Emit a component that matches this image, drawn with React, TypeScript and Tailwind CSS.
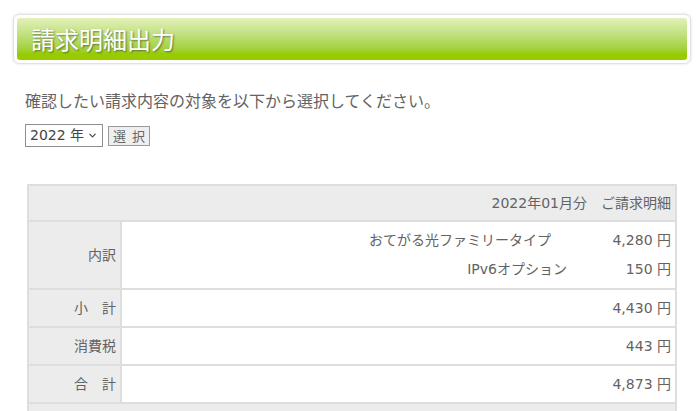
import { ChevronDown } from "lucide-react";

const items = [
  { name: "おてがる光ファミリータイプ", amount: "4,280", col: "w-[120px]" },
  { name: "IPv6オプション", amount: "150", col: "w-[104px]" },
];

const totals = [
  { label: "小\u3000計", amount: "4,430" },
  { label: "消費税", amount: "443" },
  { label: "合\u3000計", amount: "4,873" },
];

export default function App() {
  return (
    <main className="min-h-screen bg-white font-['DejaVu_Sans','Noto_Sans_CJK_JP',sans-serif] text-[#636363]">
      <div className="pl-[13px] pt-[14px]">
        <div className="w-[678px] rounded-[6px] border border-[#e2e2e2] bg-white p-[3px] shadow-[0_0_3px_rgba(0,0,0,0.12)]">
          <h1 className="flex h-[42px] items-center rounded-[3px] bg-gradient-to-b from-[#e3f1b9] to-[#99cc00] to-85% pl-[14px] font-['Noto_Sans_CJK_JP',sans-serif] text-[24px] font-normal text-white [text-shadow:1px_1px_2px_rgba(0,0,0,0.45)]">
            請求明細出力
          </h1>
        </div>
      </div>

      <p className="mt-[24px] pl-[25px] font-['Noto_Sans_CJK_JP',sans-serif] text-[16px] leading-[24px]">
        確認したい請求内容の対象を以下から選択してください。
      </p>

      <div className="mt-[12px] flex items-center gap-[5px] pl-[25px]">
        <div className="flex h-[23px] w-[78px] items-center justify-between border border-[#8f8f8f] bg-white pl-[4px] pr-[4px] text-[14px] text-[#444]">
          <span>2022 年</span>
          <ChevronDown className="h-[11px] w-[11px]" strokeWidth={2.5} />
        </div>
        <button className="flex h-[20px] w-[42px] items-center justify-center border border-[#9a9a9a] bg-[#efefef] font-['Noto_Sans_CJK_JP',sans-serif] text-[13px] leading-none text-[#666]">
          選&nbsp;&nbsp;択
        </button>
      </div>

      <table className="ml-[27px] mt-[37px] w-[650px] border-separate border-spacing-[2px] bg-[#dedede] text-[14px]">
        <tbody>
          <tr>
            <td colSpan={2} className="h-[34px] bg-[#ececec] pr-[4px] text-right">
              2022年01月分{"\u3000"}ご請求明細
            </td>
          </tr>
          <tr>
            <td className="h-[66px] w-[91px] bg-[#ececec] pr-[4px] text-right">内訳</td>
            <td className="bg-white pr-[4px]">
              {items.map((it) => (
                <div key={it.name} className="flex h-[29px] items-center justify-end">
                  <span>{it.name}</span>
                  <span className={`${it.col} text-right`}>{it.amount} 円</span>
                </div>
              ))}
            </td>
          </tr>
          {totals.map((t) => (
            <tr key={t.label}>
              <td className="h-[36px] bg-[#ececec] pr-[4px] text-right">{t.label}</td>
              <td className="bg-white pr-[4px] text-right">{t.amount} 円</td>
            </tr>
          ))}
          <tr>
            <td colSpan={2} className="h-[34px] bg-[#ececec]"></td>
          </tr>
        </tbody>
      </table>
    </main>
  );
}
